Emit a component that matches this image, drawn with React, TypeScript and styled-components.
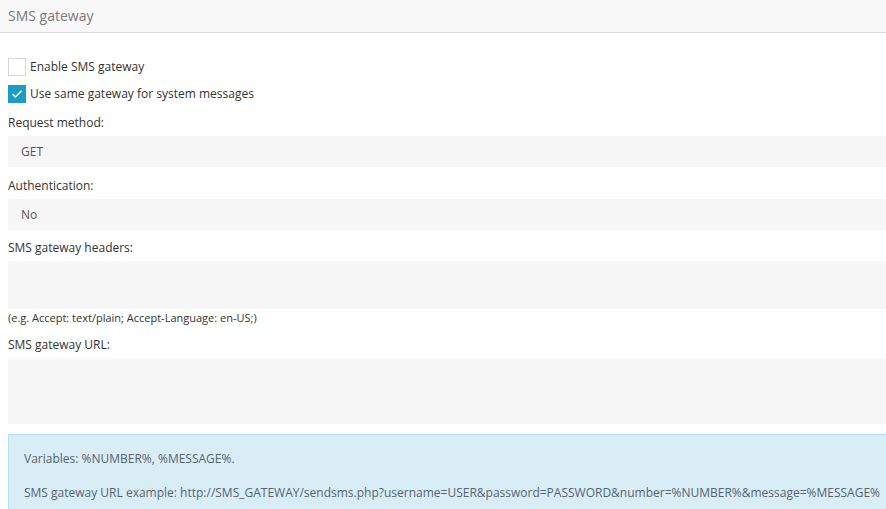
import React from "react";
import styled, { createGlobalStyle } from "styled-components";

const Global = createGlobalStyle`
  html, body { margin: 0; padding: 0; background: #fff; }
  body { font-family: "Open Sans", "Noto Sans", sans-serif; font-size: 12px; color: #333; overflow: hidden; }
  * { box-sizing: border-box; }
`;

const Header = styled.div`
  height: 33px;
  background: #f8f8f8;
  border-bottom: 1px solid #dcdcdc;
  padding: 0 8px;
  display: flex;
  align-items: center;
  font-size: 14px;
  color: #7a7a7a;
  padding-bottom: 1px;
`;

const Body = styled.div`
  padding: 25px 0 0 8px;
`;

const CheckList = styled.div`
  display: flex;
  flex-direction: column;
  gap: 9px;
  margin-bottom: 11px;
`;

const CheckRow = styled.label`
  display: flex;
  align-items: center;
  gap: 4px;
  height: 18px;
  line-height: 18px;
  color: #333;
`;

const Box = styled.span<{ $checked?: boolean }>`
  width: 18px;
  height: 18px;
  flex: none;
  border: 1px solid ${(p) => (p.$checked ? "#1b9cc3" : "#d6d6d6")};
  background: ${(p) => (p.$checked ? "#1b9cc3" : "#fff")};
  display: flex;
  align-items: center;
  justify-content: center;
`;

const Group = styled.div<{ $mb?: number }>`
  margin-bottom: ${(p) => p.$mb ?? 10}px;
`;

const Label = styled.div`
  line-height: 18px;
  margin-bottom: 4px;
  color: #333;
`;

const Select = styled.div`
  height: 31px;
  background: #f7f7f7;
  display: flex;
  align-items: center;
  padding-left: 13px;
  color: #555;
`;

const TextArea = styled.div<{ $h: number }>`
  height: ${(p) => p.$h}px;
  background: #f7f7f7;
  margin-top: 2px;
`;

const Hint = styled.div`
  line-height: 18px;
  font-size: 11px;
  color: #333;
`;

const Info = styled.div`
  background: #d9edf7;
  border: 1px solid #b4e2f0;
  border-right: none;
  padding: 15px 0 15px 15px;
  color: #556470;
  white-space: nowrap;
  margin-top: 1px;
`;

const InfoLine = styled.p`
  margin: 0 0 16px 0;
  line-height: 18px;
`;

const Check = () => (
  <svg width="12" height="10" viewBox="0 0 12 10">
    <path d="M1.5 5.2 L4.5 8 L10.5 1.8" fill="none" stroke="#fff" strokeWidth="1.6" />
  </svg>
);

export default function App() {
  return (
    <>
      <Global />
      <Header>SMS gateway</Header>
      <Body>
        <CheckList>
          <CheckRow>
            <Box />
            Enable SMS gateway
          </CheckRow>
          <CheckRow>
            <Box $checked>
              <Check />
            </Box>
            Use same gateway for system messages
          </CheckRow>
        </CheckList>
        <Group>
          <Label>Request method:</Label>
          <Select>GET</Select>
        </Group>
        <Group $mb={9}>
          <Label>Authentication:</Label>
          <Select>No</Select>
        </Group>
        <Group $mb={9}>
          <Label>SMS gateway headers:</Label>
          <TextArea $h={48} />
          <Hint>(e.g. Accept: text/plain; Accept-Language: en-US;)</Hint>
        </Group>
        <Group $mb={10}>
          <Label>SMS gateway URL:</Label>
          <TextArea $h={66} />
        </Group>
        <Info>
          <InfoLine>Variables: %NUMBER%, %MESSAGE%.</InfoLine>
          <InfoLine>
            SMS gateway URL example: http://SMS_GATEWAY/sendsms.php?username=USER&amp;password=PASSWORD&amp;number=%NUMBER%&amp;message=%MESSAGE%
          </InfoLine>
        </Info>
      </Body>
    </>
  );
}
